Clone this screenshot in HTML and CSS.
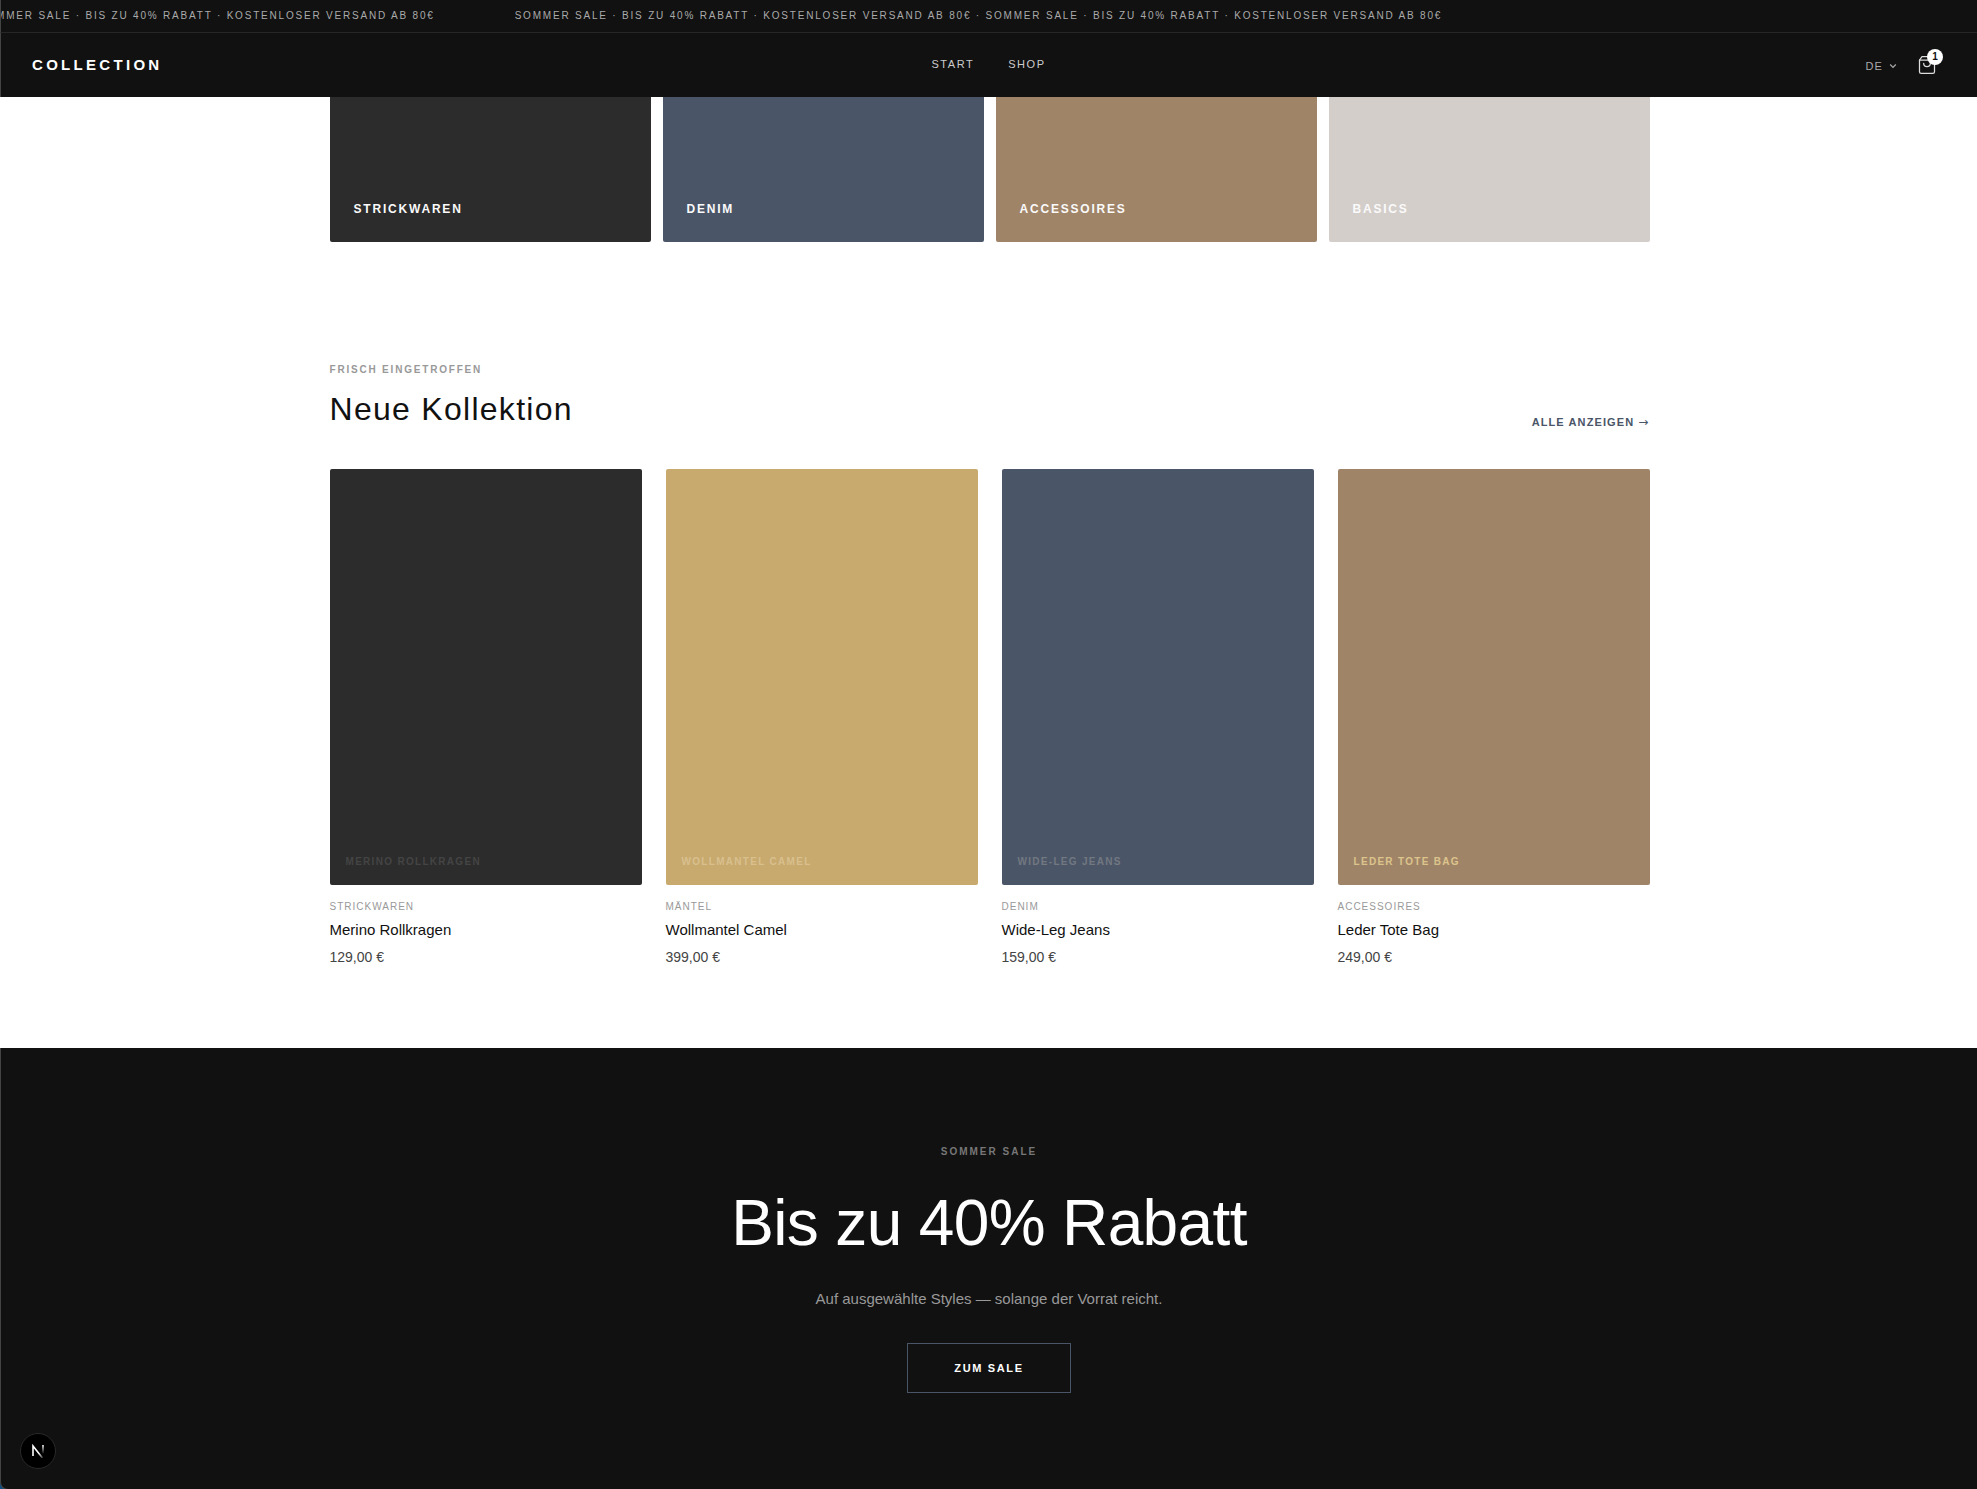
FILE: index.html
```html
<!DOCTYPE html>
<html lang="de">
<head>
    <meta charset="UTF-8">
    <meta name="viewport" content="width=device-width, initial-scale=1.0">
    <title>Collection</title>
    <link rel="stylesheet" href="styles.css">
</head>
<body>
    <div class="announcement">
        <div class="marquee">
            <span>SOMMER SALE · BIS ZU 40% RABATT · KOSTENLOSER VERSAND AB 80€</span>
            <span>SOMMER SALE · BIS ZU 40% RABATT · KOSTENLOSER VERSAND AB 80€ · SOMMER SALE · BIS ZU 40% RABATT · KOSTENLOSER VERSAND AB 80€</span>
        </div>
    </div>

    <header class="header">
        <a href="#" class="logo">COLLECTION</a>
        <nav class="nav">
            <a href="#">START</a>
            <a href="#">SHOP</a>
        </nav>
        <div class="actions">
            <button type="button" class="lang">
                DE
                <svg width="8" height="8" viewBox="0 0 8 8" fill="none" stroke="currentColor" stroke-width="1.2"><path d="M1.2 2.5 4 5.3l2.8-2.8"/></svg>
            </button>
            <button type="button" class="cart" aria-label="Warenkorb">
                <svg width="20" height="20" viewBox="0 0 24 24" fill="none" stroke="currentColor" stroke-width="1.5" stroke-linecap="round" stroke-linejoin="round">
                    <path d="M6 2 3 6v14a2 2 0 0 0 2 2h14a2 2 0 0 0 2-2V6l-3-4z"/>
                    <path d="M3 6h18"/>
                    <path d="M16 10a4 4 0 0 1-8 0"/>
                </svg>
                <span class="badge">1</span>
            </button>
        </div>
    </header>

    <main>
        <section class="container categories">
            <a href="#" class="category charcoal">STRICKWAREN</a>
            <a href="#" class="category denim">DENIM</a>
            <a href="#" class="category leather">ACCESSOIRES</a>
            <a href="#" class="category stone">BASICS</a>
        </section>

        <section class="container collection">
            <div class="section-head">
                <div>
                    <p class="eyebrow">FRISCH EINGETROFFEN</p>
                    <h2>Neue Kollektion</h2>
                </div>
                <a href="#" class="show-all">ALLE ANZEIGEN <span class="arrow">→</span></a>
            </div>

            <div class="products">
                <a href="#" class="product">
                    <div class="product-image charcoal label-dark">MERINO ROLLKRAGEN</div>
                    <p class="product-category">STRICKWAREN</p>
                    <h3>Merino Rollkragen</h3>
                    <p class="price">129,00 €</p>
                </a>
                <a href="#" class="product">
                    <div class="product-image camel label-sand">WOLLMANTEL CAMEL</div>
                    <p class="product-category">MÄNTEL</p>
                    <h3>Wollmantel Camel</h3>
                    <p class="price">399,00 €</p>
                </a>
                <a href="#" class="product">
                    <div class="product-image denim label-grey">WIDE-LEG JEANS</div>
                    <p class="product-category">DENIM</p>
                    <h3>Wide-Leg Jeans</h3>
                    <p class="price">159,00 €</p>
                </a>
                <a href="#" class="product">
                    <div class="product-image leather label-gold">LEDER TOTE BAG</div>
                    <p class="product-category">ACCESSOIRES</p>
                    <h3>Leder Tote Bag</h3>
                    <p class="price">249,00 €</p>
                </a>
            </div>
        </section>

        <div class="sale-frame">
            <section class="sale">
                <p class="sale-eyebrow">SOMMER SALE</p>
                <h1>Bis zu 40% Rabatt</h1>
                <p class="sale-text">Auf ausgewählte Styles — solange der Vorrat reicht.</p>
                <a href="#" class="sale-link">ZUM SALE</a>
            </section>
        </div>
    </main>

    <button type="button" class="dev-badge" aria-label="Dev Tools">
        <svg width="14" height="14" viewBox="0 0 14 14" fill="none">
            <defs>
                <linearGradient id="fade-diagonal" x1="8" y1="9" x2="13" y2="15" gradientUnits="userSpaceOnUse">
                    <stop stop-color="#fff"/>
                    <stop offset="1" stop-color="#fff" stop-opacity="0"/>
                </linearGradient>
                <linearGradient id="fade-stem" x1="0" y1="1" x2="0" y2="10" gradientUnits="userSpaceOnUse">
                    <stop stop-color="#fff"/>
                    <stop offset="1" stop-color="#fff" stop-opacity="0"/>
                </linearGradient>
            </defs>
            <path d="M2 12V2l9.500 12" stroke="url(#fade-diagonal)" stroke-width="1.600"/>
            <path d="M12 1v9" stroke="url(#fade-stem)" stroke-width="1.600"/>
        </svg>
    </button>
</body>
</html>
```
FILE: styles.css
```css
* {
    box-sizing: border-box;
    margin: 0;
    padding: 0;
}

body {
    min-height: 100vh;
    display: flex;
    flex-direction: column;
    font-family: "Liberation Sans", Arial, sans-serif;
    background-color: #fff;
    color: #111;
    overflow-x: hidden;
}

a {
    color: inherit;
    text-decoration: none;
}

button {
    border: none;
    background: none;
    color: inherit;
    font-family: inherit;
    cursor: pointer;
}

svg {
    display: block;
}

main {
    flex: 1;
    display: flex;
    flex-direction: column;
}

/* top bar */
.announcement {
    height: 33px;
    overflow: hidden;
    background-color: #111;
    border-bottom: 1px solid #262626;
    border-left: 1px solid #444;
}

.marquee {
    display: flex;
    gap: 80px;
    width: max-content;
    margin-left: -23px;
    font-size: 10px;
    line-height: 32px;
    letter-spacing: 0.18em;
    color: #aaa;
    white-space: nowrap;
}

.header {
    height: 64px;
    padding: 0 40px 0 31px;
    display: grid;
    grid-template-columns: 1fr auto 1fr;
    align-items: center;
    background-color: #111;
    border-left: 1px solid #444;
}

.logo {
    padding-bottom: 2px;
    font-size: 15px;
    font-weight: 700;
    letter-spacing: 0.22em;
    color: #fff;
}

.nav {
    display: flex;
    gap: 34px;
    padding: 0 0 2px 8px;
    font-size: 11px;
    letter-spacing: 0.14em;
    color: #ccc;
}

.actions {
    display: flex;
    justify-content: flex-end;
    align-items: center;
    gap: 20px;
}

.lang {
    display: flex;
    align-items: center;
    gap: 6px;
    padding-top: 2px;
    font-size: 11px;
    letter-spacing: 0.1em;
    color: #aaa;
}

.cart {
    position: relative;
    height: 20px;
    color: #ddd;
}

.badge {
    position: absolute;
    top: -6px;
    right: -6px;
    width: 16px;
    height: 16px;
    border-radius: 50%;
    background-color: #fff;
    color: #111;
    font-size: 10px;
    font-weight: 700;
    line-height: 16px;
    text-align: center;
}

.container {
    width: 100%;
    max-width: 1400px;
    margin: 0 auto;
    padding: 0 39px 0 41px;
}

.charcoal { background-color: #2c2c2c; }
.denim { background-color: #4a5568; }
.leather { background-color: #a08468; }
.stone { background-color: #d4ceca; }
.camel { background-color: #c8a96e; }

/* categories */
.categories {
    display: grid;
    grid-template-columns: repeat(4, 1fr);
    gap: 12px;
}

.category {
    height: 145px;
    padding: 24px;
    display: flex;
    align-items: flex-end;
    border-radius: 0 0 2px 2px;
    font-size: 12px;
    font-weight: 700;
    line-height: 18px;
    letter-spacing: 0.15em;
    color: #fafafa;
}

/* new collection */
.collection {
    padding-top: 120px;
    padding-bottom: 80px;
}

.section-head {
    display: flex;
    justify-content: space-between;
    align-items: flex-end;
    margin-bottom: 40px;
}

.eyebrow {
    margin-bottom: 12px;
    font-size: 10px;
    font-weight: 700;
    line-height: 15px;
    letter-spacing: 0.18em;
    color: #999;
}

h2 {
    font-size: 32px;
    font-weight: 400;
    line-height: 40px;
    letter-spacing: 0.04em;
}

.show-all {
    font-size: 11px;
    font-weight: 700;
    line-height: 14px;
    letter-spacing: 0.1em;
    color: #4a5568;
}

.arrow {
    font-family: "DejaVu Sans", sans-serif;
    font-size: 12px;
    font-weight: 400;
}

.products {
    display: grid;
    grid-template-columns: repeat(4, 1fr);
    gap: 24px;
}

.product-image {
    aspect-ratio: 3 / 4;
    margin-bottom: 14px;
    padding: 16px;
    display: flex;
    align-items: flex-end;
    border-radius: 2px;
    font-size: 10px;
    font-weight: 700;
    line-height: 15px;
    letter-spacing: 0.13em;
}

.label-dark { color: #444; }
.label-sand { color: #d8c08e; }
.label-grey { color: #727880; }
.label-gold { color: #dcc48c; }

.product-category {
    margin-bottom: 5px;
    font-size: 10px;
    line-height: 15px;
    letter-spacing: 0.1em;
    color: #999;
}

h3 {
    margin-bottom: 6px;
    font-size: 15px;
    font-weight: 400;
    line-height: 22px;
}

.price {
    font-size: 14px;
    line-height: 21px;
    color: #444;
}

/* sale */
.sale-frame {
    flex: 1;
    display: flex;
    background-color: #0f4c81;
}

.sale {
    flex: 1;
    padding: 96px 40px;
    display: flex;
    flex-direction: column;
    align-items: center;
    background-color: #111;
    border-left: 1px solid #444;
    border-bottom: 1px solid #444;
    border-bottom-left-radius: 8px;
    text-align: center;
}

.sale-eyebrow {
    margin-bottom: 24px;
    font-size: 10px;
    font-weight: 700;
    line-height: 15px;
    letter-spacing: 0.2em;
    color: #777;
}

h1 {
    margin-bottom: 24px;
    font-size: 64px;
    font-weight: 400;
    line-height: 80px;
    letter-spacing: -0.01em;
    color: #fff;
}

.sale-text {
    margin-bottom: 32px;
    font-size: 15px;
    line-height: 24px;
    color: #999;
}

.sale-link {
    padding: 16px 46px;
    border: 1px solid #4a5568;
    font-size: 11px;
    font-weight: 700;
    line-height: 16px;
    letter-spacing: 0.15em;
    color: #fff;
}

.dev-badge {
    position: fixed;
    left: 20px;
    bottom: 20px;
    width: 36px;
    height: 36px;
    display: flex;
    align-items: center;
    justify-content: center;
    border: 1px solid #2a2a2a;
    border-radius: 50%;
    background-color: #000;
}
```
